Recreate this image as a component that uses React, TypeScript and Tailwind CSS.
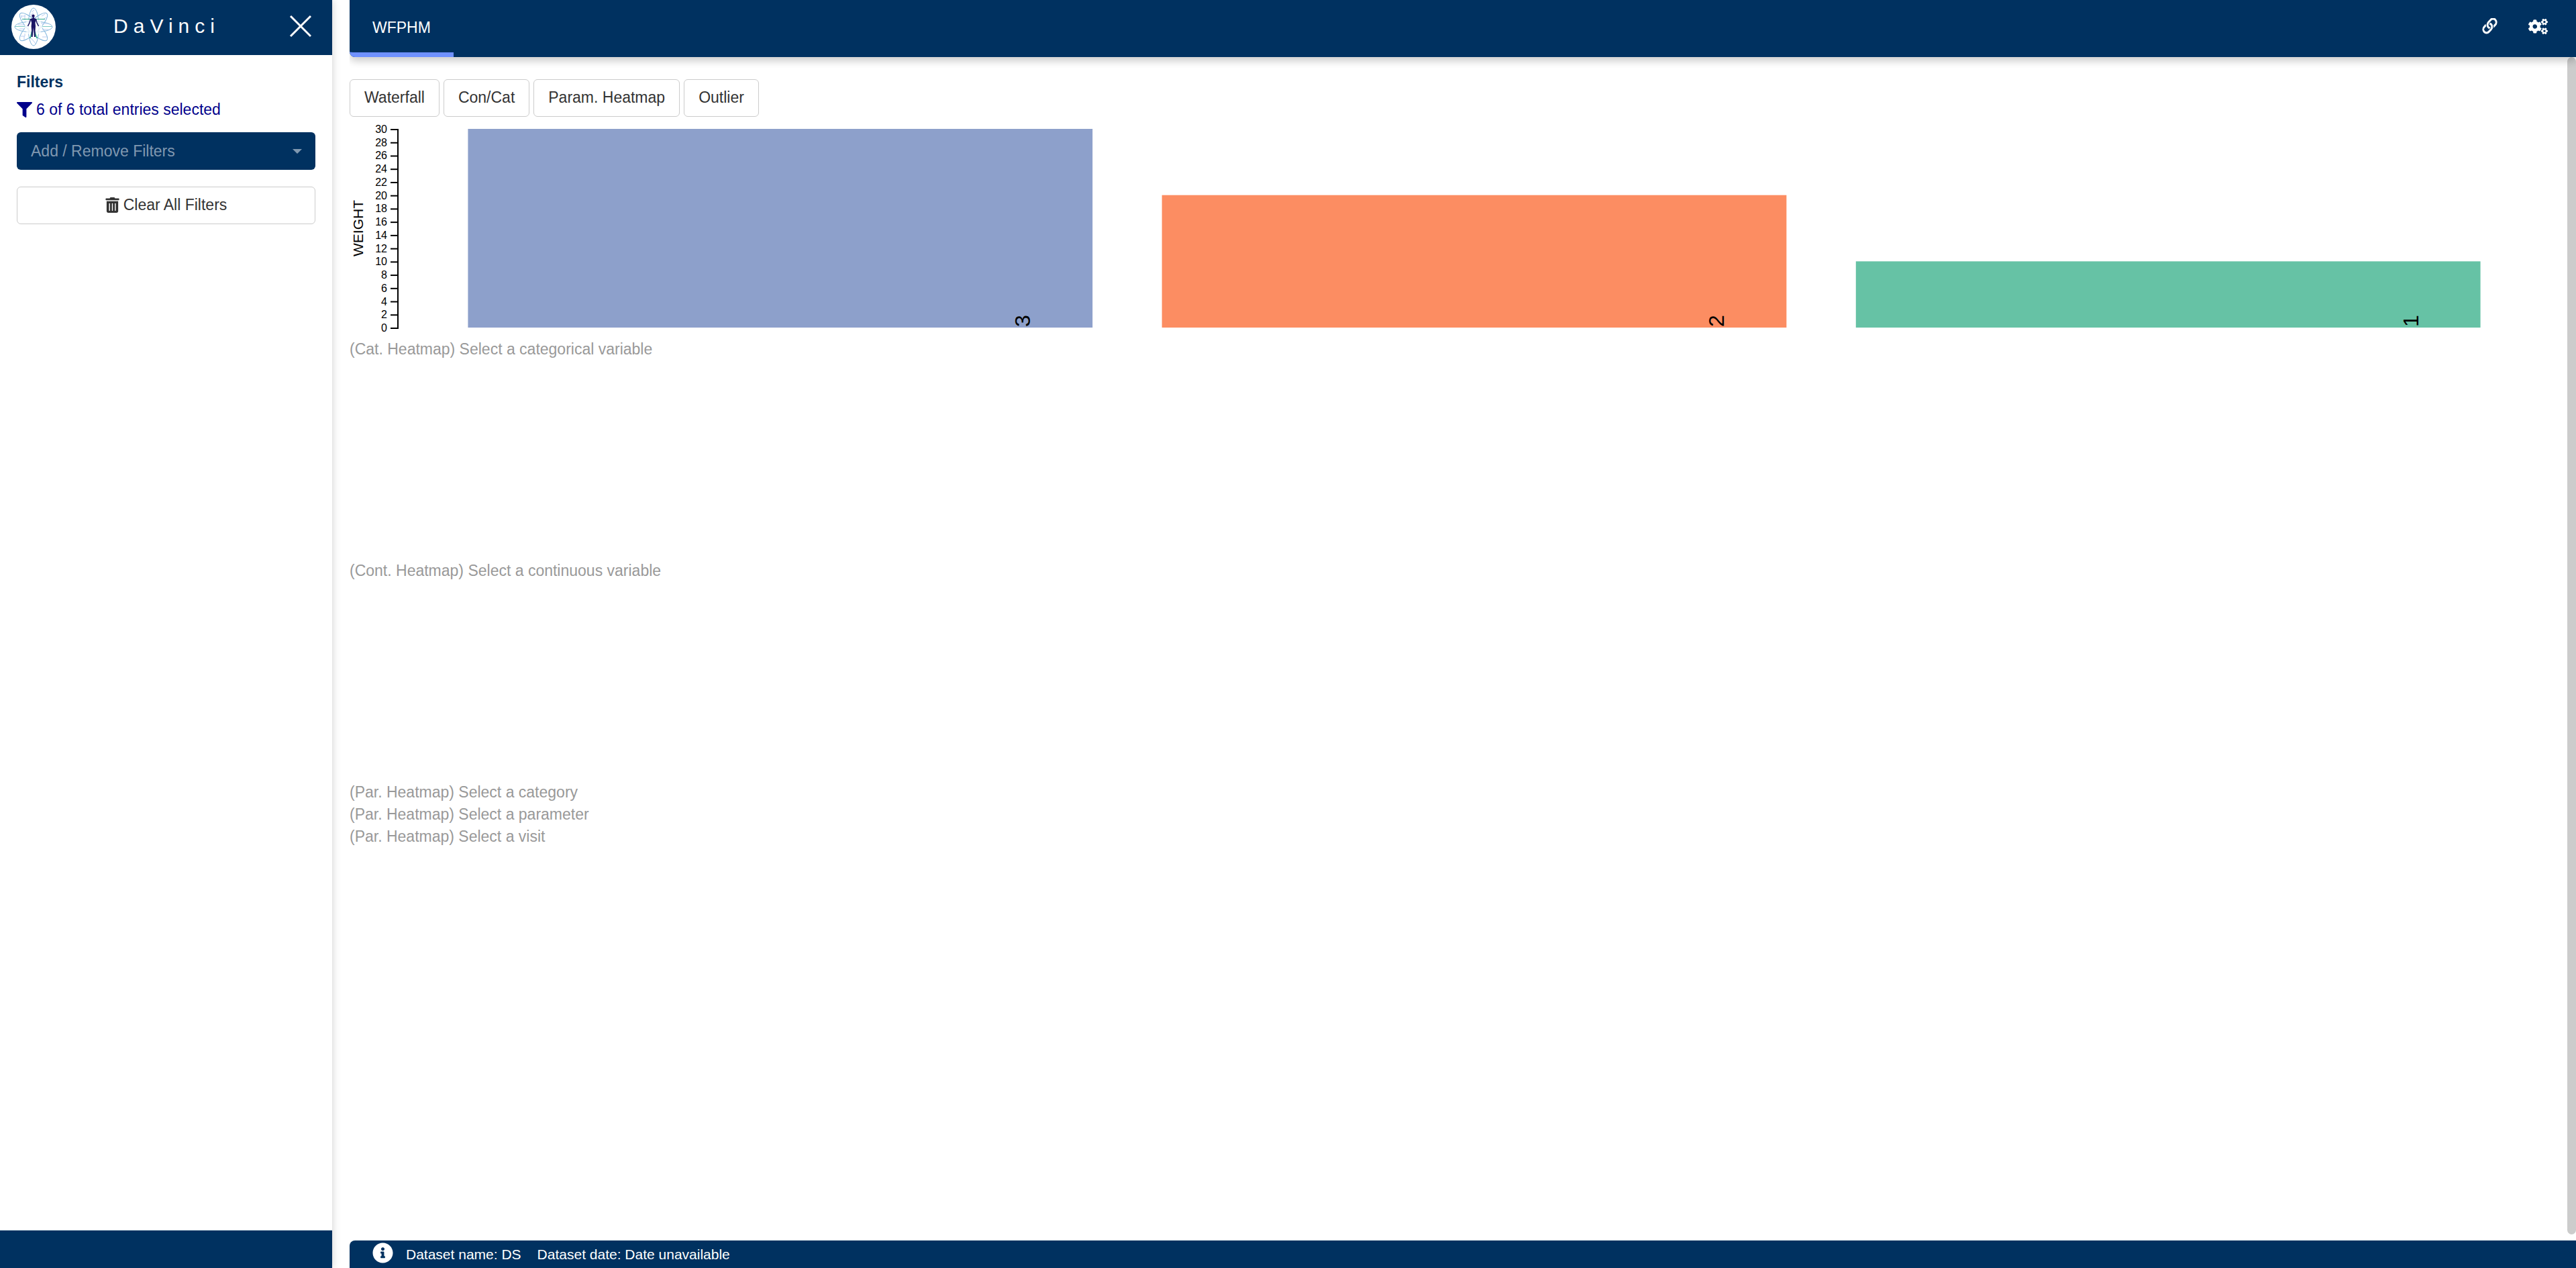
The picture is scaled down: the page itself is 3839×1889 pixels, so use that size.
import React from "react";
import { FaCogs, FaFilter, FaInfoCircle, FaTrashAlt } from "react-icons/fa";

const TICKS = [30, 28, 26, 24, 22, 20, 18, 16, 14, 12, 10, 8, 6, 4, 2, 0];

const BARS = [
  { label: "3", value: 30, color: "#8da0cb" },
  { label: "2", value: 20, color: "#fc8d62" },
  { label: "1", value: 10, color: "#66c2a5" },
];

const PLOT_TOP = 18;
const PLOT_HEIGHT = 296;
const STEP = 100 / 3.1;

function yOf(value: number) {
  return PLOT_TOP + PLOT_HEIGHT * (1 - value / 30);
}

function Logo() {
  return (
    <svg viewBox="0 0 66 66" className="size-[66px] shrink-0" role="img" aria-label="DaVinci logo">
      <circle cx="33" cy="33" r="33" fill="#fff" />
      <g fill="none" stroke="#7fb4dc" strokeWidth="1">
        <ellipse cx="33" cy="33" rx="28" ry="8" />
        <ellipse cx="33" cy="33" rx="28" ry="8" transform="rotate(90 33 33)" />
        <ellipse cx="33" cy="33" rx="28" ry="8.5" transform="rotate(45 33 33)" />
        <ellipse cx="33" cy="33" rx="28" ry="8.5" transform="rotate(-45 33 33)" />
      </g>
      <circle cx="33" cy="33" r="13" fill="#fff" fillOpacity="0.75" />
      <g fill="none" stroke="#b9cdf0" strokeWidth="1">
        <path d="M14 17h7M15 20v-4M20 15v8M45 17l5-3M47 22l5-3M10 30h10M44 28h10M12 36h8M46 37h9M14 47h6v-4M19 53v-6M46 48h7M33 54l-4-4M33 54l3 4M30 11l4-3M28 16l5-4" />
      </g>
      <path d="M5 32.500h15M46 32.500h14" stroke="#7cc9c4" fill="none" />
      <path d="M16 21.500h34" stroke="#2aa88a" strokeWidth="1.200" fill="none" />
      <path d="M31 38l-3 12M34 38l4 12M29 49h-2M37 49h2" stroke="#35b58d" strokeWidth="1.500" fill="none" />
      <circle cx="32.500" cy="16.800" r="2.200" fill="#1b1464" />
      <path
        d="M28.500 21.500L27 27l-2.500 5M36.500 21.500L38 27l2.500 5"
        stroke="#1b1464"
        strokeWidth="1.500"
        fill="none"
      />
      <path
        d="M31.500 18.500h2l.5 1.500 3 1-1.500 6 .5 5-.5 7 .5 9h-2l-1.200-14-1.200 14h-2l.5-9-.5-7 .5-5-1.500-6 3-1z"
        fill="#1b1464"
      />
    </svg>
  );
}

function ChainIcon() {
  return (
    <svg
      viewBox="2 2 12 12"
      preserveAspectRatio="none"
      className="h-[25px] w-[23px]"
      fill="currentColor"
      stroke="currentColor"
      strokeWidth="0.500"
      aria-hidden="true"
    >
      <path d="M4.715 6.542 3.343 7.914a3 3 0 1 0 4.243 4.243l1.828-1.829A3 3 0 0 0 8.586 5.500L8 6.086a1 1 0 0 0-.154.199 2 2 0 0 1 .861 3.337L6.880 11.450a2 2 0 1 1-2.830-2.830l.793-.792a4 4 0 0 1-.128-1.287z" />
      <path d="M6.586 4.672A3 3 0 0 0 7.414 9.500l.775-.776a2 2 0 0 1-.896-3.346L9.120 3.550a2 2 0 1 1 2.830 2.830l-.793.792c.112.420.155.855.128 1.287l1.372-1.372a3 3 0 1 0-4.243-4.243z" />
    </svg>
  );
}

function Sidebar() {
  return (
    <aside className="z-10 flex w-[495px] shrink-0 flex-col bg-white shadow-[0_0_12px_rgba(0,0,0,0.2)]">
      <header className="flex h-[82px] items-center bg-[#003160] pb-[3px] pl-[17px] pr-[31px] text-white">
        <Logo />
        <h1 className="flex-1 pb-[2px] pr-[17px] text-center text-[30px] leading-[42px] tracking-[8px]">DaVinci</h1>
        <button type="button" aria-label="Close sidebar" className="size-[33px]">
          <svg viewBox="0 0 33 33" className="size-[33px]" stroke="currentColor" strokeWidth="3" aria-hidden="true">
            <path d="M2 1l30 30M32 1l-30 30" />
          </svg>
        </button>
      </header>
      <div className="flex flex-1 flex-col px-[25px] pt-6">
        <label htmlFor="filters" className="font-bold text-[#003160]">
          Filters
        </label>
        <p className="mt-2 flex items-center gap-[6px] text-[#00008b]">
          <FaFilter className="size-[23px]" aria-hidden="true" />
          6 of 6 total entries selected
        </p>
        <div className="mt-[17px] grid items-center">
          <select
            id="filters"
            defaultValue=""
            className="col-start-1 row-start-1 h-14 w-full appearance-none rounded-md bg-[#003160] px-[21px] text-[#8098b0]"
          >
            <option value="">Add / Remove Filters</option>
          </select>
          <svg
            viewBox="0 0 14 7"
            className="pointer-events-none col-start-1 row-start-1 mr-5 h-[7px] w-[14px] justify-self-end"
            fill="#8098b0"
            aria-hidden="true"
          >
            <path d="M0 0h14l-7 7z" />
          </svg>
        </div>
        <button
          type="button"
          className="mt-[25px] flex h-14 items-center justify-center gap-[6px] rounded-md border border-[#ccc] bg-white pb-[2px] text-[#333]"
        >
          <FaTrashAlt className="h-[23px] w-[21px]" aria-hidden="true" />
          Clear All Filters
        </button>
      </div>
      <footer className="h-14 bg-[#003160]" />
    </aside>
  );
}

function WeightChart() {
  return (
    <div className="flex h-[330px] pr-[26px]">
      <svg className="h-[330px] w-[73px] shrink-0 overflow-visible" role="img" aria-label="Weight axis">
        <text transform="translate(20 166) rotate(-90)" textAnchor="middle" fontSize="21">
          WEIGHT
        </text>
        {TICKS.map((t) => (
          <g key={t}>
            <line x1="61" x2="72" y1={yOf(t) + 1} y2={yOf(t) + 1} stroke="#000" strokeWidth="2" />
            <text x="56" y={yOf(t) + 6} textAnchor="end" fontSize="16">
              {t}
            </text>
          </g>
        ))}
        <line x1="72" x2="72" y1={PLOT_TOP} y2={PLOT_TOP + PLOT_HEIGHT + 2} stroke="#000" strokeWidth="2" />
      </svg>
      <svg className="h-[330px] min-w-0 flex-1 overflow-visible" role="img" aria-label="Weight by subject">
        {BARS.map((b, i) => (
          <g key={b.label}>
            <rect
              x={`${STEP * (i + 0.1)}%`}
              y={yOf(b.value)}
              width={`${STEP * 0.9}%`}
              height={yOf(0) - yOf(b.value)}
              fill={b.color}
            />
            <svg x={`${STEP * (i + 0.91)}%`} y="313" className="overflow-visible">
              <text transform="rotate(-90)" fontSize="32">
                {b.label}
              </text>
            </svg>
          </g>
        ))}
      </svg>
    </div>
  );
}

function Placeholder({ lines }: { lines: string[] }) {
  return (
    <section className="h-[330px] text-[#999]">
      {lines.map((line) => (
        <p key={line}>{line}</p>
      ))}
    </section>
  );
}

export default function App() {
  return (
    <div className="flex h-screen gap-[26px] overflow-hidden bg-white font-['Liberation_Sans',Arial,sans-serif] text-[23px] leading-[33px] text-[#333]">
      <Sidebar />
      <div className="flex min-w-0 flex-1 flex-col overflow-hidden">
        <header className="z-10 flex h-[85px] shrink-0 justify-between rounded-bl-lg bg-[#003160] text-white shadow-[0_6px_12px_rgba(0,0,0,0.2)]">
          <nav className="flex">
            <a
              href="#wfphm"
              className="flex items-center rounded-bl-lg border-b-[7px] border-[#6f91ff] px-[34px] pt-1"
            >
              WFPHM
            </a>
          </nav>
          <div className="flex items-center gap-[46px] pb-[7px] pr-[42px]">
            <button type="button" aria-label="Copy link">
              <ChainIcon />
            </button>
            <button type="button" aria-label="Settings">
              <FaCogs className="h-[29px] w-[29px]" />
            </button>
          </div>
        </header>
        <div className="flex min-h-0 flex-1 justify-between pb-[9px]">
          <main className="min-w-0 flex-1 pt-[33px] text-black">
            <div className="flex gap-[6px]">
              {["Waterfall", "Con/Cat", "Param. Heatmap", "Outlier"].map((name) => (
                <button
                  key={name}
                  type="button"
                  className="h-14 rounded-md border border-[#ccc] bg-white px-[21px] pb-[2px] text-[#333]"
                >
                  {name}
                </button>
              ))}
            </div>
            <WeightChart />
            <Placeholder lines={["(Cat. Heatmap) Select a categorical variable"]} />
            <Placeholder lines={["(Cont. Heatmap) Select a continuous variable"]} />
            <Placeholder
              lines={[
                "(Par. Heatmap) Select a category",
                "(Par. Heatmap) Select a parameter",
                "(Par. Heatmap) Select a visit",
              ]}
            />
          </main>
          <div className="w-[13px] shrink-0 rounded-full bg-[#ccc]" aria-hidden="true" />
        </div>
        <footer className="flex h-[41px] shrink-0 items-center rounded-tl-lg bg-[#003160] pl-[34px] text-[21px] text-white">
          <FaInfoCircle className="mb-1 size-[31px]" aria-hidden="true" />
          <span className="ml-[19px]">Dataset name: DS</span>
          <span className="ml-6">Dataset date: Date unavailable</span>
        </footer>
      </div>
    </div>
  );
}
